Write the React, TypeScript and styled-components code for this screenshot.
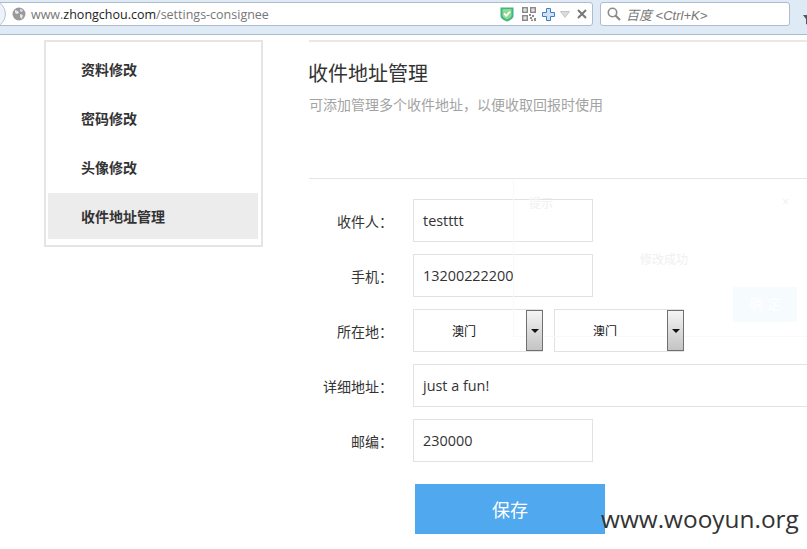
import React from "react";
import styled, { createGlobalStyle } from "styled-components";

const GlobalStyle = createGlobalStyle`
  html, body {
    margin: 0;
    padding: 0;
    width: 807px;
    height: 549px;
    overflow: hidden;
    background: #fff;
    font-family: "Liberation Sans", "Noto Sans CJK SC", sans-serif;
  }
`;

const Page = styled.div`
  position: relative;
  width: 807px;
  height: 549px;
  overflow: hidden;
`;

const Toolbar = styled.div`
  position: relative;
  height: 35px;
  box-sizing: border-box;
  padding: 2px 0 0 0;
  background: #dfeaf7;
  border-bottom: 1px solid #a9bccf;
  display: flex;
  align-items: flex-start;
  &::before {
    content: "";
    position: absolute;
    z-index: 1;
    left: -22px;
    top: 0;
    width: 28px;
    height: 28px;
    box-sizing: border-box;
    border: 1px solid #b9c6d4;
    border-radius: 50%;
    background: #eef3f9;
  }
`;

const AddressBar = styled.div`
  flex: none;
  width: 595px;
  height: 24px;
  margin-left: -2px;
  box-sizing: border-box;
  background: #fff;
  border: 1px solid #aebccb;
  border-radius: 0 3px 3px 0;
  display: flex;
  align-items: center;
  padding: 0 5px 0 13px;
  font-size: 13px;
  font-family: "Open Sans", "Liberation Sans", sans-serif;
  color: #777;
`;

const Url = styled.span`
  margin-left: 5px;
  flex: 1;
  white-space: nowrap;
  font-size: 12.5px;
  b {
    font-weight: 400;
    color: #222;
  }
`;

const IconSlot = styled.span<{ $gap: number }>`
  display: flex;
  margin-left: ${(p) => p.$gap}px;
`;

const SearchBox = styled.div`
  flex: none;
  width: 190px;
  height: 24px;
  margin-left: 7px;
  box-sizing: border-box;
  background: #fff;
  border: 1px solid #aebccb;
  border-radius: 3px;
  display: flex;
  align-items: center;
  padding-left: 6px;
  gap: 5px;
  font-size: 13px;
  font-style: italic;
  color: #777;
`;

const Funnel = styled.div`
  flex: none;
  margin: 9px 0 0 13px;
`;

const Content = styled.div`
  display: flex;
  align-items: flex-start;
  padding: 5px 0 0 44px;
`;

const Sidebar = styled.nav`
  width: 219px;
  height: 207px;
  box-sizing: border-box;
  border: 2px solid #e5e5e5;
  padding: 4px 3px 0 2px;
  display: flex;
  flex-direction: column;
  gap: 3px;
`;

const NavItem = styled.div<{ $active?: boolean }>`
  height: 46px;
  line-height: 48px;
  padding-left: 33px;
  font-size: 14px;
  font-weight: 700;
  color: #333;
  background: ${(p) => (p.$active ? "#ececec" : "transparent")};
`;

const Main = styled.main`
  margin-left: 46px;
  flex: 1;
  min-width: 0;
`;

const Header = styled.header`
  height: 139px;
  box-sizing: border-box;
  border-top: 2px solid #e8e8e8;
  border-bottom: 1px solid #e5e5e5;
  padding-top: 20px;
`;

const Title = styled.h1`
  margin: 0 0 0 -1px;
  font-size: 20px;
  line-height: 24px;
  font-weight: 400;
  color: #333;
`;

const Subtitle = styled.p`
  margin: 9px 0 0;
  font-size: 14px;
  line-height: 20px;
  color: #a3a3a3;
`;

const Form = styled.form`
  margin-top: 20px;
  display: flex;
  flex-direction: column;
  gap: 12px;
`;

const Row = styled.div`
  display: flex;
  align-items: center;
  height: 43px;
`;

const Label = styled.label`
  flex: none;
  width: 84px;
  margin-right: 20px;
  text-align: right;
  font-size: 14px;
  color: #333;
  white-space: nowrap;
`;

const Field = styled.div<{ $wide?: boolean }>`
  flex: none;
  width: ${(p) => (p.$wide ? "400px" : "180px")};
  height: 43px;
  box-sizing: border-box;
  border: 1px solid #e2e2e2;
  ${(p) => (p.$wide ? "border-right: none;" : "")}
  padding-left: 9px;
  display: flex;
  align-items: center;
  font-size: 14.4px;
  font-family: "Open Sans", "Liberation Sans", "Noto Sans CJK SC", sans-serif;
  color: #333;
`;

const SelectBox = styled.div`
  position: relative;
  width: 130px;
  height: 43px;
  box-sizing: border-box;
  border: 1px solid #e2e2e2;
  border-right: none;
  margin-right: 11px;
  display: flex;
  align-items: center;
  padding-left: 38px;
  font-size: 12px;
  color: #111;
`;

const SelectArrow = styled.span`
  position: absolute;
  z-index: 1;
  right: 0;
  top: 0;
  width: 17px;
  height: 41px;
  box-sizing: border-box;
  border: 1px solid #707070;
  background: linear-gradient(#f4f4f4, #c4c4c4);
  display: flex;
  align-items: center;
  justify-content: center;
  &::after {
    content: "";
    border-left: 4px solid transparent;
    border-right: 4px solid transparent;
    border-top: 4px solid #111;
  }
`;

const SaveButton = styled.button`
  width: 190px;
  height: 50px;
  margin: 10px 0 0 106px;
  border: none;
  padding: 0;
  background: #50a8ee;
  color: #fff;
  font-size: 18px;
  font-family: inherit;
`;

/* faint dialog left over from the fade-out, lies over the form */
const Ghost = styled.div`
  position: absolute;
  left: 513px;
  top: 180px;
  width: 294px;
  height: 157px;
  box-sizing: border-box;
  border-left: 1px solid #f9f9f9;
  border-bottom: 1px solid #f9f9f9;
  color: #f0f0f0;
  font-size: 12px;
  pointer-events: none;
`;

const GhostTitle = styled.span`
  position: absolute;
  left: 15px;
  top: 14px;
`;

const GhostClose = styled.span`
  position: absolute;
  right: 18px;
  top: 15px;
`;

const GhostText = styled.span`
  position: absolute;
  left: 126px;
  top: 70px;
`;

const GhostButton = styled.span`
  position: absolute;
  left: 219px;
  top: 107px;
  width: 64px;
  height: 35px;
  background: #f6fbfe;
  color: #fff;
  text-align: center;
  line-height: 35px;
  font-size: 14px;
`;

const Watermark = styled.div`
  position: absolute;
  left: 601px;
  top: 504px;
  font-family: "Open Sans", "Liberation Sans", sans-serif;
  font-size: 24.4px;
  line-height: 30px;
  color: #333;
  white-space: nowrap;
`;

const GlobeIcon = () => (
  <svg width="14" height="14" viewBox="0 0 14 14">
    <circle cx="7" cy="7" r="6.5" fill="#9a9a9a" />
    <path d="M3 3l3 1 1 2-2 1-2-1zM8 7l3 1-1 4-2-2zM8 2l3 1-1 2-2-1z" fill="#e4e4e4" />
  </svg>
);

const ShieldIcon = () => (
  <svg width="14" height="16" viewBox="0 0 14 16">
    <path d="M0.5 1.5h13v8.5c0 2.5-3.5 4.5-6.5 5.5-3-1-6.5-3-6.5-5.5z" fill="#3fb58a" />
    <path d="M2.5 3h9v6.5c0 1.5-2.5 3-4.5 4-2-1-4.5-2.5-4.5-4z" fill="#8fdc8f" />
    <path d="M4 7.5l2.2 2.2 4-4.2" stroke="#fff" strokeWidth="1.8" fill="none" />
  </svg>
);

const QrIcon = () => (
  <svg width="14" height="14" viewBox="0 0 14 14" fill="#8a8a8a">
    <path d="M0 0h6v6H0zM1.5 1.5v3h3v-3zM8 0h6v6H8zM9.5 1.5v3h3v-3zM0 8h6v6H0zM1.5 9.5v3h3v-3z" fillRule="evenodd" />
    <path d="M2.5 2.5h1v1h-1zM10.5 2.5h1v1h-1zM2.5 10.5h1v1h-1zM7 7h2v2H7zM10 8h2v2h-2zM8 10h2v2H8zM12 11h2v3h-2zM9 12.5h2v1.5H9z" />
  </svg>
);

const PlusIcon = () => (
  <svg width="13" height="13" viewBox="0 0 13 13">
    <path d="M4.5 0.5h4v4h4v4h-4v4h-4v-4h-4v-4h4z" fill="#cfe2f6" stroke="#3f7fc4" />
  </svg>
);

const DownIcon = () => (
  <svg width="10" height="7" viewBox="0 0 10 7">
    <path d="M0.5 0.5h9L5 6.5z" fill="#dcdcdc" stroke="#c4c4c4" />
  </svg>
);

const CloseIcon = () => (
  <svg width="10" height="10" viewBox="0 0 10 10">
    <path d="M1 1l8 8M9 1l-8 8" stroke="#777" strokeWidth="2" />
  </svg>
);

const SearchIcon = () => (
  <svg width="14" height="14" viewBox="0 0 14 14" fill="none">
    <circle cx="5.5" cy="5.5" r="4.2" stroke="#8a8a8a" strokeWidth="1.6" />
    <path d="M8.5 8.5l4.5 4.5" stroke="#8a8a8a" strokeWidth="2.2" />
  </svg>
);

const FunnelIcon = () => (
  <svg width="8" height="10" viewBox="0 0 8 10">
    <path d="M0 0h8L5 4v6L3 9V4z" fill="#555" />
  </svg>
);

const navItems = ["资料修改", "密码修改", "头像修改", "收件地址管理"];

const App: React.FC = () => {
  return (
    <Page>
      <GlobalStyle />
      <Toolbar>
        <AddressBar>
          <GlobeIcon />
          <Url>
            www.<b>zhongchou.com</b>/settings-consignee
          </Url>
          <IconSlot $gap={0}>
            <ShieldIcon />
          </IconSlot>
          <IconSlot $gap={8}>
            <QrIcon />
          </IconSlot>
          <IconSlot $gap={6}>
            <PlusIcon />
          </IconSlot>
          <IconSlot $gap={5}>
            <DownIcon />
          </IconSlot>
          <IconSlot $gap={7}>
            <CloseIcon />
          </IconSlot>
        </AddressBar>
        <SearchBox>
          <SearchIcon />
          百度 &lt;Ctrl+K&gt;
        </SearchBox>
        <Funnel>
          <FunnelIcon />
        </Funnel>
      </Toolbar>
      <Content>
        <Sidebar>
          {navItems.map((item, i) => (
            <NavItem key={item} $active={i === 3}>
              {item}
            </NavItem>
          ))}
        </Sidebar>
        <Main>
          <Header>
            <Title>收件地址管理</Title>
            <Subtitle>可添加管理多个收件地址，以便收取回报时使用</Subtitle>
          </Header>
          <Form>
            <Row>
              <Label>收件人：</Label>
              <Field>testttt</Field>
            </Row>
            <Row>
              <Label>手机：</Label>
              <Field>13200222200</Field>
            </Row>
            <Row>
              <Label>所在地：</Label>
              <SelectBox>
                澳门
                <SelectArrow />
              </SelectBox>
              <SelectBox>
                澳门
                <SelectArrow />
              </SelectBox>
            </Row>
            <Row>
              <Label>详细地址：</Label>
              <Field $wide>just a fun!</Field>
            </Row>
            <Row>
              <Label>邮编：</Label>
              <Field>230000</Field>
            </Row>
            <SaveButton type="button">保存</SaveButton>
          </Form>
        </Main>
      </Content>
      <Ghost>
        <GhostTitle>提示</GhostTitle>
        <GhostClose>×</GhostClose>
        <GhostText>修改成功</GhostText>
        <GhostButton>确 定</GhostButton>
      </Ghost>
      <Watermark>www.wooyun.org</Watermark>
    </Page>
  );
};

export default App;
